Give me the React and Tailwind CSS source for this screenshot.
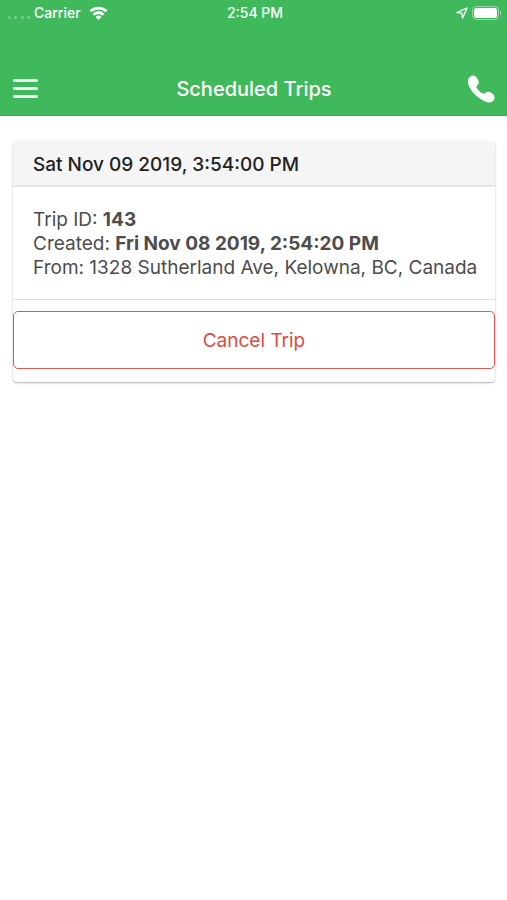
const trips = [
  {
    id: 143,
    pickup: "Sat Nov 09 2019, 3:54:00 PM",
    created: "Fri Nov 08 2019, 2:54:20 PM",
    from: "1328 Sutherland Ave, Kelowna, BC, Canada",
  },
];

function WifiIcon() {
  return (
    <svg className="ml-1 h-[14px] w-[19px]" viewBox="0 0 20 15" fill="none" stroke="currentColor" strokeWidth="2.9" aria-hidden="true">
      <path d="M1.400 5.700a12.300 12.300 0 0 1 17.200 0" />
      <path d="M4.700 9.300a7.600 7.600 0 0 1 10.600 0" />
      <path d="M10 14.900 6.900 11.800a4.400 4.400 0 0 1 6.200 0Z" fill="currentColor" stroke="none" />
    </svg>
  );
}

function LocationIcon() {
  return (
    <svg className="h-3 w-3" viewBox="0 0 12 12" fill="none" stroke="currentColor" strokeWidth="1.3" strokeLinejoin="round" aria-hidden="true">
      <path d="M11.1 1 .9 5.6l5 .6.6 5Z" />
    </svg>
  );
}

function BatteryIcon() {
  return (
    <svg className="h-[14px] w-[30px]" viewBox="0 0 30 14" aria-hidden="true">
      <rect x="0.5" y="0.5" width="26" height="13" rx="4" fill="none" stroke="#fff" strokeOpacity="0.45" />
      <rect x="2" y="2" width="23" height="10" rx="2.5" fill="#fff" />
      <path d="M28 4.8c1.7.6 1.7 3.8 0 4.4Z" fill="#fff" fillOpacity="0.5" />
    </svg>
  );
}

function PhoneIcon() {
  return (
    <svg className="h-7 w-7" viewBox="0 0 28 28" fill="currentColor" aria-hidden="true">
      <path d="M1.800 3.200C2.900 1.500 4.500.4 6.200.5 7.800.6 9 1.700 10.100 3.300 11.400 5.200 12.100 6.700 11.700 8.300 11.300 9.800 9.300 10.400 9.400 11.900 9.600 13.700 14 18.100 16.100 18.600 17.700 18.900 18.500 17.100 20.200 16.900 21.900 16.700 23.900 17.400 25.500 18.700 27.100 20 27.700 21.300 27.500 22.900 27.300 24.700 26 26.300 24.300 27.100 21.500 28.300 17.300 26.700 12.500 23.300 7.300 19.600 3.300 14.800 1.600 10.200.7 7.400.7 5 1.800 3.200Z" />
    </svg>
  );
}

function StatusBar() {
  return (
    <div className="grid h-[26px] grid-cols-3 items-center pr-[5px] pl-2 text-sm font-medium">
      <div className="flex items-center gap-1">
        <span className="flex w-[22px] justify-between pt-2">
          <span className="size-[3px] rounded-full bg-white/30" />
          <span className="size-[3px] rounded-full bg-white/30" />
          <span className="size-[3px] rounded-full bg-white/30" />
          <span className="size-[3px] rounded-full bg-white/30" />
        </span>
        <span>Carrier</span>
        <WifiIcon />
      </div>
      <span className="text-center">2:54 PM</span>
      <div className="flex items-center justify-end gap-1">
        <LocationIcon />
        <BatteryIcon />
      </div>
    </div>
  );
}

function Header() {
  return (
    <header className="border-b border-[#38a852] bg-[#40b95c] text-white">
      <StatusBar />
      <div className="mt-9 grid h-[53px] grid-cols-[1fr_auto_1fr] items-center pr-3 pl-[13px]">
        <button type="button" aria-label="Menu" className="flex w-[25px] flex-col gap-[5px]">
          <span className="h-[3px] w-full rounded-sm bg-white/90" />
          <span className="h-[3px] w-full rounded-sm bg-white/90" />
          <span className="h-[3px] w-full rounded-sm bg-white/90" />
        </button>
        <h1 className="text-xl font-medium">Scheduled Trips</h1>
        <button type="button" aria-label="Call" className="justify-self-end">
          <PhoneIcon />
        </button>
      </div>
    </header>
  );
}

function TripCard({ trip }) {
  return (
    <article className="rounded-sm bg-white pb-[13px] shadow-[0_1px_2px_rgba(0,0,0,0.32)]">
      <h2 className="rounded-t-sm border-b-2 border-[#e6e6e6] bg-[#f5f5f5] px-5 pt-[10px] pb-[6px] text-[19px] leading-[28px] font-medium text-[#222]">
        {trip.pickup}
      </h2>
      <div className="border-b border-[#dedede] pt-[21px] pr-3 pb-[19px] pl-5 text-[19px] leading-[24px] text-[#4d4d4d]">
        <p>Trip ID: <strong className="font-bold">{trip.id}</strong></p>
        <p>Created: <strong className="font-bold">{trip.created}</strong></p>
        <p>From: {trip.from}</p>
      </div>
      <button
        type="button"
        className="mt-[11px] h-[58px] w-full rounded-[5px] border border-[#e0574f] pt-[2px] text-[19px] text-[#e0493f]"
      >
        Cancel Trip
      </button>
    </article>
  );
}

export default function App() {
  return (
    <div className="min-h-screen bg-white font-['Inter',sans-serif]">
      <Header />
      <main className="flex flex-col gap-6 pt-[25px] pr-3 pl-[13px]">
        {trips.map((trip) => (
          <TripCard key={trip.id} trip={trip} />
        ))}
      </main>
    </div>
  );
}
